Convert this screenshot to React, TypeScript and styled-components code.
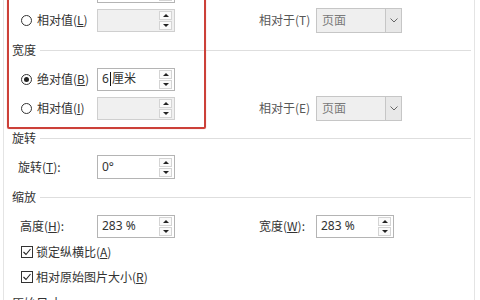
import React, { FC, ReactNode } from 'react'
import styled, { createGlobalStyle } from 'styled-components'

const GlobalStyle = createGlobalStyle`
  body {
    margin: 0;
    background: #fff;
    font-family: "Noto Sans CJK SC", "Noto Sans", sans-serif;
  }
`

const Page = styled.div`
  position: relative;
  width: 480px;
  height: 300px;
  overflow: hidden;
  background: #fff;
`

const Panel = styled.div`
  box-sizing: border-box;
  width: 472px;
  min-height: 340px;
  margin: -21px 0 0 3px;
  padding: 0 3px 0 8px;
  border-left: 1px solid #e4e4e4;
  border-right: 1px solid #e4e4e4;
  font-size: 12px;
  line-height: 16px;
  color: #333;
`

const Heading = styled.div`
  display: flex;
  align-items: center;
  gap: 4px;
  height: 16px;
  margin: 10px 0 9px;
  color: #333;
  &::after {
    content: '';
    flex: 1;
    height: 1px;
    background: #dedede;
  }
`

const Row = styled.div<{ $top?: number }>`
  display: flex;
  align-items: center;
  height: 24px;
  padding-left: 8px;
  margin-top: ${p => p.$top ?? 0}px;
`

const LabelCell = styled.label`
  display: flex;
  align-items: center;
  gap: 5px;
  width: 77px;
  white-space: nowrap;
`

const PlainLabel = styled.span`
  margin-left: -2px;
`

const Radio = styled.span<{ $checked?: boolean }>`
  box-sizing: border-box;
  width: 11px;
  height: 11px;
  margin-left: 1px;
  border: 1px solid #333;
  border-radius: 50%;
  display: flex;
  align-items: center;
  justify-content: center;
  &::after {
    content: '';
    width: 5px;
    height: 5px;
    border-radius: 50%;
    background: ${p => (p.$checked ? '#222' : 'transparent')};
  }
`

const SpinBox = styled.div<{ $disabled?: boolean; $tall?: boolean }>`
  box-sizing: border-box;
  width: 78px;
  height: ${p => (p.$tall ? 24 : 23)}px;
  display: flex;
  align-items: center;
  padding: 0 2px 0 4px;
  border: 1px solid ${p => (p.$disabled ? '#cfcfcf' : '#b4b4b4')};
  background: ${p => (p.$disabled ? '#f0f0f0' : '#fff')};
  color: #333;
  font-family: "Noto Sans", "Noto Sans CJK SC", sans-serif;
`

const Value = styled.span`
  flex: 1;
  display: flex;
  align-items: center;
  white-space: nowrap;
`

const Caret = styled.span`
  display: inline-block;
  width: 1px;
  height: 14px;
  margin: 0 1px;
  background: #111;
`

const Spinner = styled.div`
  display: flex;
  flex-direction: column;
  gap: 1px;
`

const SpinButton = styled.span<{ $down?: boolean }>`
  box-sizing: border-box;
  width: 13px;
  height: 9px;
  border: 1px solid #d4d4d4;
  background: #fafafa;
  display: flex;
  align-items: center;
  justify-content: center;
  &::after {
    content: '';
    border-left: 3px solid transparent;
    border-right: 3px solid transparent;
    ${p => (p.$down ? 'border-top: 3px solid #222;' : 'border-bottom: 3px solid #222;')}
  }
`

const RightGroup = styled.div`
  display: flex;
  align-items: center;
  margin-left: 84px;
`

const SideLabel = styled.span<{ $muted?: boolean }>`
  width: 57px;
  white-space: nowrap;
  color: ${p => (p.$muted ? '#585858' : '#333')};
`

const Select = styled.div`
  box-sizing: border-box;
  width: 86px;
  height: 25px;
  display: flex;
  border: 1px solid #c6c6c6;
  background: #efefef;
  color: #7a7a7a;
`

const SelectText = styled.span`
  flex: 1;
  display: flex;
  align-items: center;
  padding-left: 5px;
`

const SelectArrow = styled.span`
  width: 15px;
  border-left: 1px solid #c6c6c6;
  background: #e8e8e8;
  display: flex;
  align-items: center;
  justify-content: center;
`

const CheckRow = styled.label<{ $top: number }>`
  display: flex;
  align-items: center;
  gap: 3px;
  height: 16px;
  padding-left: 9px;
  margin-top: ${p => p.$top}px;
  white-space: nowrap;
`

const CheckBox = styled.span`
  box-sizing: border-box;
  width: 12px;
  height: 12px;
  border: 1px solid #333;
  display: flex;
  align-items: center;
  justify-content: center;
`

const Highlight = styled.div`
  position: absolute;
  left: 7px;
  top: -5px;
  width: 199px;
  height: 134px;
  box-sizing: border-box;
  border: 2px solid #cc4038;
  border-radius: 2px;
  box-shadow: 0 0 1px rgba(204, 64, 56, 0.6);
  pointer-events: none;
`

const Spin: FC<{ children?: ReactNode; disabled?: boolean; tall?: boolean }> = ({ children, disabled, tall }) => (
  <SpinBox $disabled={disabled} $tall={tall}>
    <Value>{children}</Value>
    <Spinner>
      <SpinButton />
      <SpinButton $down />
    </Spinner>
  </SpinBox>
)

const Dropdown: FC<{ value: string }> = ({ value }) => (
  <Select>
    <SelectText>{value}</SelectText>
    <SelectArrow>
      <svg width="8" height="5" viewBox="0 0 8 5">
        <path d="M0.5 0.5 L4 4 L7.5 0.5" fill="none" stroke="#666" strokeWidth="1" />
      </svg>
    </SelectArrow>
  </Select>
)

const Check: FC = () => (
  <CheckBox>
    <svg width="10" height="10" viewBox="0 0 10 10">
      <path d="M1.5 5 L4 7.5 L8.5 2" fill="none" stroke="#222" strokeWidth="1.1" />
    </svg>
  </CheckBox>
)

const App: FC = () => (
  <>
    <GlobalStyle />
    <Page>
      <Panel>
        {/* row scrolled above the top edge: only the bottom of its box shows */}
        <Row>
          <LabelCell />
          <Spin />
        </Row>
        <Row $top={5}>
          <LabelCell>
            <Radio />
            <span>相对值(<u>L</u>)</span>
          </LabelCell>
          <Spin disabled />
          <RightGroup>
            <SideLabel $muted>相对于(T)</SideLabel>
            <Dropdown value="页面" />
          </RightGroup>
        </Row>

        <Heading>宽度</Heading>
        <Row>
          <LabelCell>
            <Radio $checked />
            <span>绝对值(<u>B</u>)</span>
          </LabelCell>
          <Spin>6<Caret />厘米</Spin>
        </Row>
        <Row $top={5}>
          <LabelCell>
            <Radio />
            <span>相对值(<u>I</u>)</span>
          </LabelCell>
          <Spin disabled />
          <RightGroup>
            <SideLabel $muted>相对于(E)</SideLabel>
            <Dropdown value="页面" />
          </RightGroup>
        </Row>

        <Heading>旋转</Heading>
        <Row>
          <LabelCell>
            <PlainLabel>旋转(<u>T</u>):</PlainLabel>
          </LabelCell>
          <Spin tall>0°</Spin>
        </Row>

        <Heading>缩放</Heading>
        <Row>
          <LabelCell>
            <span>高度(<u>H</u>):</span>
          </LabelCell>
          <Spin>283 %</Spin>
          <RightGroup>
            <SideLabel>宽度(<u>W</u>):</SideLabel>
            <Spin>283 %</Spin>
          </RightGroup>
        </Row>
        <CheckRow $top={6}>
          <Check />
          <span>锁定纵横比(<u>A</u>)</span>
        </CheckRow>
        <CheckRow $top={9}>
          <Check />
          <span>相对原始图片大小(<u>R</u>)</span>
        </CheckRow>

        <Heading>原始尺寸</Heading>
      </Panel>
      <Highlight />
    </Page>
  </>
)

export default App
